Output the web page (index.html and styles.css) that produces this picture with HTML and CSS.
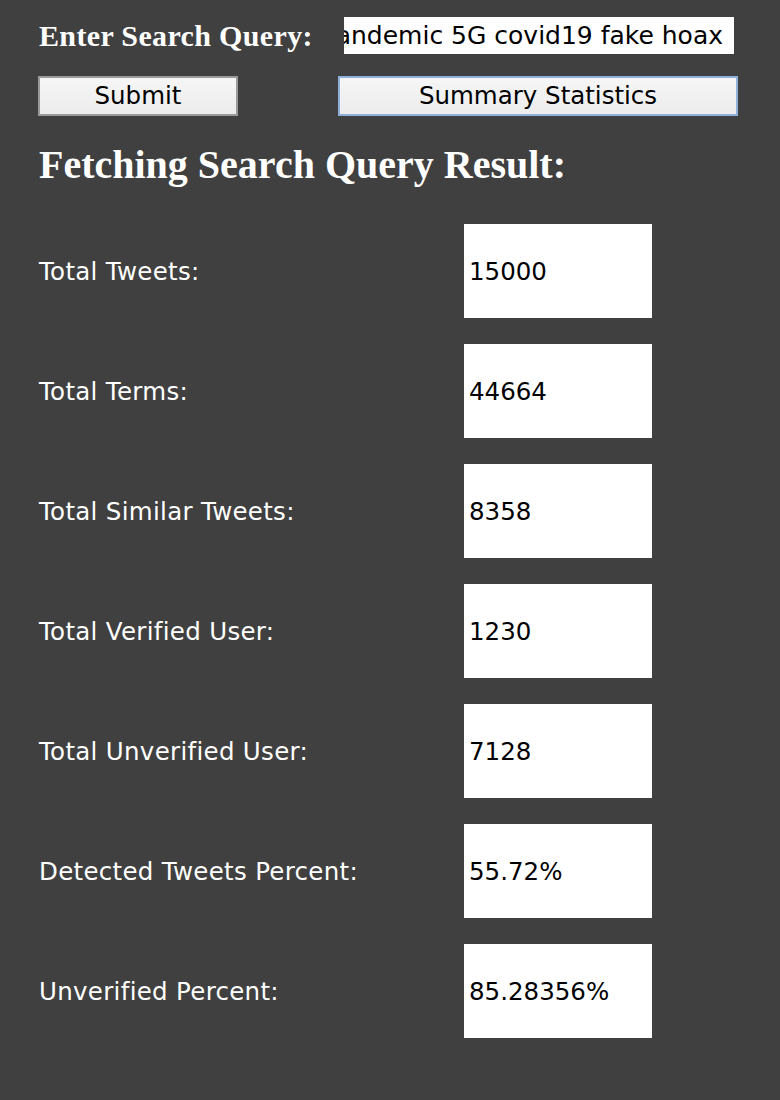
FILE: index.html
```html
<!DOCTYPE html>
<html lang="en">
<head>
  <meta charset="UTF-8" />
  <title>Fake News Detector</title>
  <link rel="stylesheet" href="styles.css">
</head>
<body>
  <div class="page">
    <div class="query-row">
      <label class="query-label">Enter Search Query:</label>
      <div class="query-field"><span>covid pandemic 5G covid19 fake hoax</span></div>
    </div>
    <div class="button-row">
      <button class="btn btn-submit">Submit</button>
      <button class="btn btn-summary">Summary Statistics</button>
    </div>

    <h2 class="result-title">Fetching Search Query Result:</h2>

    <div class="stats">
      <div class="stat-label">Total Tweets:</div>
      <div class="stat-box">15000</div>
      <div class="stat-label">Total Terms:</div>
      <div class="stat-box">44664</div>
      <div class="stat-label">Total Similar Tweets:</div>
      <div class="stat-box">8358</div>
      <div class="stat-label">Total Verified User:</div>
      <div class="stat-box">1230</div>
      <div class="stat-label">Total Unverified User:</div>
      <div class="stat-box">7128</div>
      <div class="stat-label">Detected Tweets Percent:</div>
      <div class="stat-box">55.72%</div>
      <div class="stat-label">Unverified Percent:</div>
      <div class="stat-box">85.28356%</div>
    </div>
  </div>
</body>
</html>
```

FILE: styles.css
```css
body {
  margin: 0;
  background-color: #404040;
  font-family: "DejaVu Sans", sans-serif;
}
.page {
  padding: 17px 0 40px 38px;
  height: 1043px;
}
.query-row {
  display: grid;
  grid-template-columns: 306px 390px;
  align-items: center;
}
.query-label {
  font-family: "Liberation Serif", serif;
  font-weight: bold;
  font-size: 30px;
  letter-spacing: 0.35px;
  color: #fff;
  padding-left: 1px;
}
.query-field {
  height: 37px;
  background: #fff;
  display: flex;
  justify-content: flex-end;
  align-items: center;
  overflow: hidden;
  white-space: nowrap;
  font-size: 25px;
  color: #000;
  padding-right: 11px;
}
.button-row {
  display: grid;
  grid-template-columns: 300px 400px;
  margin-top: 22px;
}
.btn {
  height: 40px;
  font-family: "DejaVu Sans", sans-serif;
  font-size: 24.5px;
  color: #000;
  background: linear-gradient(#f6f6f6, #ececec);
  padding: 0;
  line-height: 1;
}
.btn-submit {
  width: 200px;
  border: 2px solid #9a9a9a;
}
.btn-summary {
  width: 400px;
  border: 2px solid #8fb0d8;
}
.result-title {
  font-family: "Liberation Serif", serif;
  font-weight: bold;
  font-size: 40px;
  line-height: 46px;
  color: #fff;
  margin: 26px 0 0 1px;
}
.stats {
  display: grid;
  grid-template-columns: 426px 188px;
  grid-auto-rows: 94px;
  row-gap: 26px;
  align-items: center;
  margin-top: 36px;
}
.stat-label {
  font-size: 24.5px;
  letter-spacing: 0.3px;
  color: #fff;
  padding-left: 1px;
}
.stat-box {
  height: 94px;
  background: #fff;
  color: #000;
  font-size: 24.5px;
  display: flex;
  align-items: center;
  padding-left: 5px;
}
```
